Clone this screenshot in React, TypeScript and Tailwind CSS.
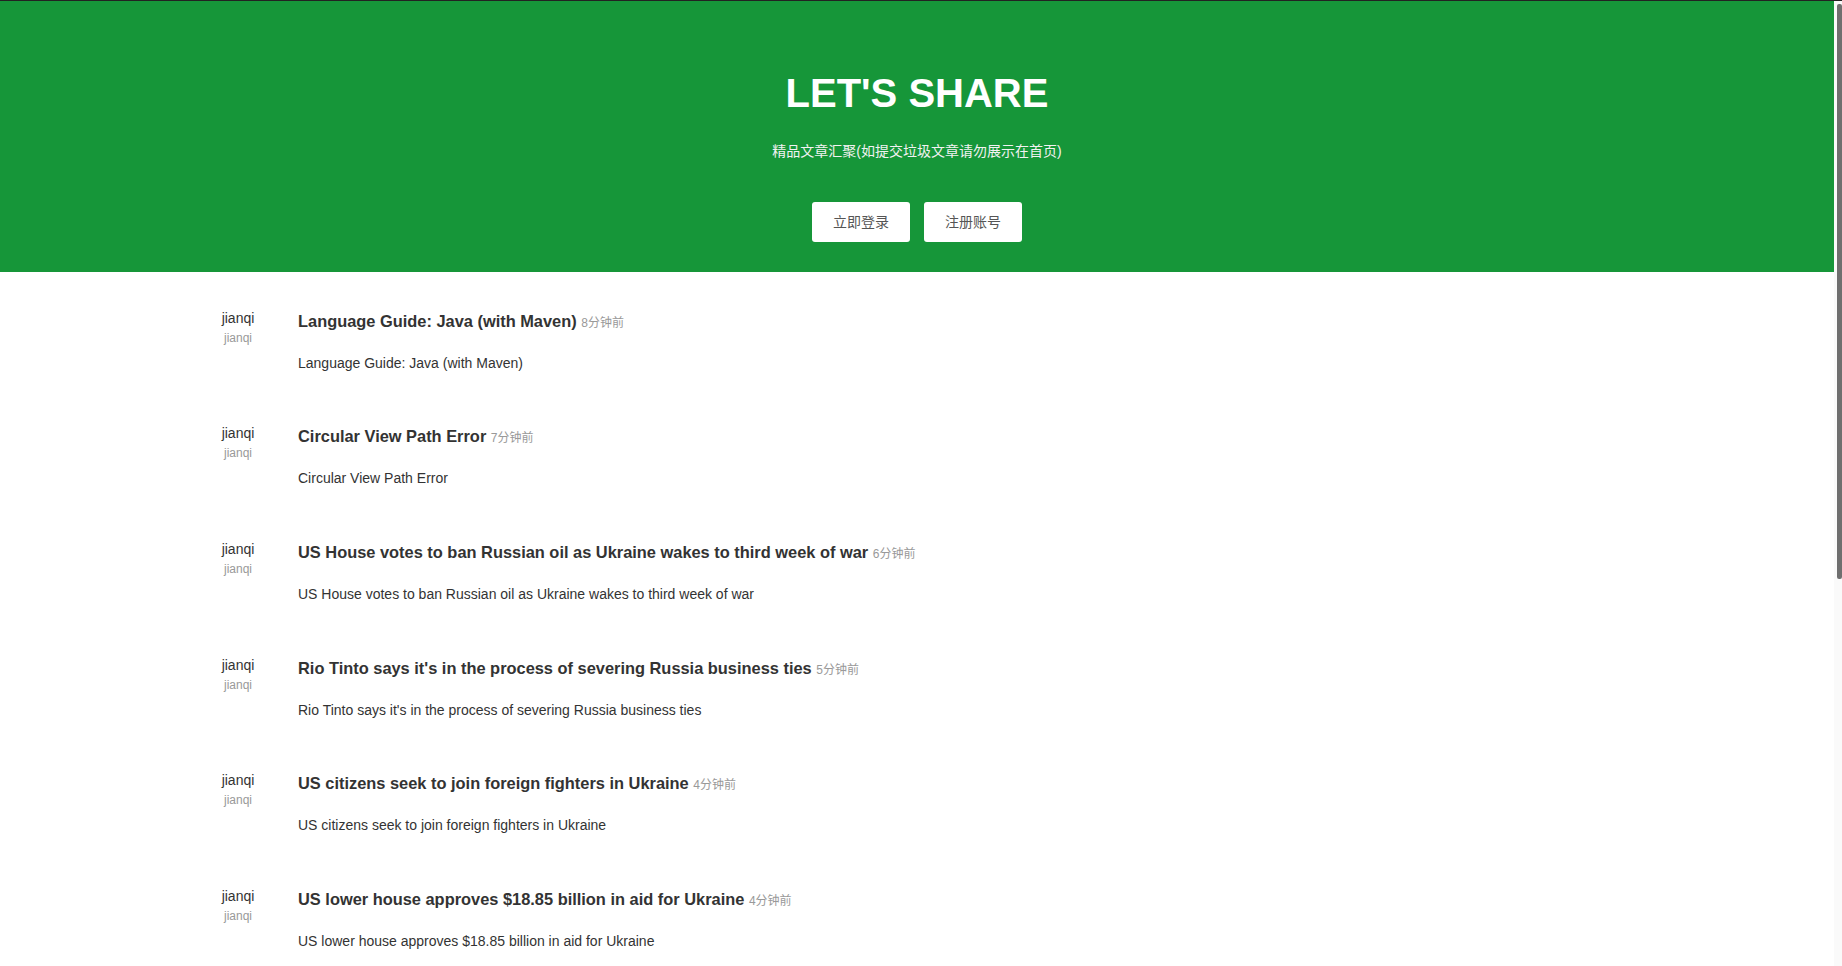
import React from "react";

interface Post {
  id: number;
  author: string;
  title: string;
  summary: string;
  time: string;
}

const POSTS: Post[] = [
  { id: 1, author: "jianqi", title: "Language Guide: Java (with Maven)", summary: "Language Guide: Java (with Maven)", time: "8分钟前" },
  { id: 2, author: "jianqi", title: "Circular View Path Error", summary: "Circular View Path Error", time: "7分钟前" },
  { id: 3, author: "jianqi", title: "US House votes to ban Russian oil as Ukraine wakes to third week of war", summary: "US House votes to ban Russian oil as Ukraine wakes to third week of war", time: "6分钟前" },
  { id: 4, author: "jianqi", title: "Rio Tinto says it's in the process of severing Russia business ties", summary: "Rio Tinto says it's in the process of severing Russia business ties", time: "5分钟前" },
  { id: 5, author: "jianqi", title: "US citizens seek to join foreign fighters in Ukraine", summary: "US citizens seek to join foreign fighters in Ukraine", time: "4分钟前" },
  { id: 6, author: "jianqi", title: "US lower house approves $18.85 billion in aid for Ukraine", summary: "US lower house approves $18.85 billion in aid for Ukraine", time: "4分钟前" },
  { id: 7, author: "jianqi", title: "Spring Boot Reference Documentation", summary: "Spring Boot Reference Documentation", time: "3分钟前" },
  { id: 8, author: "jianqi", title: "Getting Started with Docker Compose", summary: "Getting Started with Docker Compose", time: "3分钟前" },
];

const FONT = "font-['Liberation_Sans','Noto_Sans_CJK_SC',sans-serif]";

function PostItem({ post }: { post: Post }) {
  return (
    <div className="flex py-[25.45px]">
      {/* author column */}
      <div className="w-[60px] shrink-0 pt-[1px] text-center">
        <p className="text-[14px] leading-[18px] text-[#333]">{post.author}</p>
        <p className="mt-[3px] text-[12px] leading-[16px] text-[#999]">{post.author}</p>
      </div>

      {/* title + summary */}
      <div className="ml-[30px] min-w-0 pt-[2px]">
        <h4 className="text-[16.4px] leading-[22px] font-bold text-[#333]">
          {post.title} <small className="text-[12px] font-normal text-[#999]">{post.time}</small>
        </h4>
        <p className="mt-[18.8px] text-[14px] leading-[20px] text-[#333]">{post.summary}</p>
      </div>
    </div>
  );
}

export default function App() {
  return (
    <div className={`flex h-screen flex-col overflow-hidden bg-white ${FONT}`}>
      <div className="h-[1px] shrink-0 bg-[#222]" />

      <div className="flex min-h-0 flex-1">
        <main className="min-w-0 flex-1 overflow-hidden">
          {/* Hero */}
          <div className="bg-[#169639] pt-[71px] pb-[30px] text-center">
            <h1 className="text-[40px] leading-[43px] font-bold text-white">LET'S SHARE</h1>
            <p className="mt-[26px] text-[14px] leading-[20px] text-[#f2f2f2]">
              精品文章汇聚(如提交垃圾文章请勿展示在首页)
            </p>
            <div className="mt-[41px] flex justify-center gap-[14px]">
              <button className="h-[40px] w-[98px] rounded-[3px] bg-white text-[14px] text-[#555]">立即登录</button>
              <button className="h-[40px] w-[98px] rounded-[3px] bg-white text-[14px] text-[#555]">注册账号</button>
            </div>
          </div>

          {/* Post list */}
          <div className="pt-[10.3px] pb-[20px] pl-[208px] pr-[40px]">
            {POSTS.map((p) => (
              <PostItem key={p.id} post={p} />
            ))}
          </div>
        </main>

        {/* scrollbar */}
        <div className="w-[8px] shrink-0 bg-[#fafafa]">
          <div className="mt-[3px] ml-[3px] h-[575px] w-[5px] rounded-[2px] bg-[#6f6f6f]" />
        </div>
      </div>
    </div>
  );
}
